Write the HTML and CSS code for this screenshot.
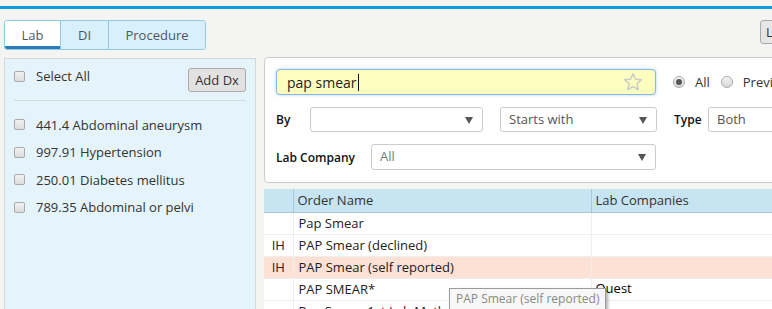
FILE: index.html
```html
<!DOCTYPE html>
<html lang="en">
<head>
  <meta charset="utf-8" />
  <meta name="viewport" content="width=device-width,initial-scale=1" />
  <title>Lab Orders</title>
  <link rel="stylesheet" href="styles.css">
</head>
<body>
  <div class="topbar"></div>

  <div class="head">
    <div class="tabs">
      <button class="tab active">Lab</button>
      <button class="tab">DI</button>
      <button class="tab">Procedure</button>
    </div>
    <button class="side-btn">Lab Orders</button>
  </div>

  <div class="main">
    <aside class="dx-panel">
      <div class="dx-head">
        <label class="chk"><span class="box"></span>Select All</label>
        <button class="btn">Add Dx</button>
      </div>
      <ul class="dx-list">
        <li><label class="chk"><span class="box"></span>441.4 Abdominal aneurysm</label></li>
        <li><label class="chk"><span class="box"></span>997.91 Hypertension</label></li>
        <li><label class="chk"><span class="box"></span>250.01 Diabetes mellitus</label></li>
        <li><label class="chk"><span class="box"></span>789.35 Abdominal or pelvi</label></li>
      </ul>
    </aside>

    <section class="orders">
      <div class="filters">
        <div class="row">
          <div class="search">
            <span class="search-text">pap smear</span><span class="caret"></span>
            <svg class="star" width="20" height="20" viewBox="0 0 20 20"><path d="M10 1.8l2.5 5.4 5.8.6-4.4 4 1.3 5.8L10 14.6l-5.2 3 1.3-5.8-4.4-4 5.8-.6z" fill="none" stroke="#c8c8c8" stroke-width="1.4" stroke-linejoin="round"/></svg>
          </div>
          <label class="radio on"><span class="dot"></span>All</label>
          <label class="radio"><span class="dot"></span>Previous</label>
        </div>
        <div class="row">
          <span class="lbl lbl-by">By</span>
          <div class="select sel-by"></div>
          <div class="select sel-match">Starts with</div>
          <span class="lbl lbl-type">Type</span>
          <div class="select sel-type">Both</div>
        </div>
        <div class="row">
          <span class="lbl lbl-co">Lab Company</span>
          <div class="select sel-co muted">All</div>
        </div>
      </div>

      <table class="grid">
        <thead>
          <tr><th class="c-flag"></th><th class="c-name">Order Name</th><th class="c-co">Lab Companies</th></tr>
        </thead>
        <tbody>
          <tr><td class="c-flag"></td><td>Pap Smear</td><td></td></tr>
          <tr><td class="c-flag">IH</td><td>PAP Smear (declined)</td><td></td></tr>
          <tr class="hl"><td class="c-flag">IH</td><td>PAP Smear (self reported)</td><td></td></tr>
          <tr><td class="c-flag"></td><td>PAP SMEAR*</td><td class="quest">Quest</td></tr>
          <tr><td class="c-flag"></td><td>Pap Smear 1st Lab Method</td><td></td></tr>
        </tbody>
      </table>

      <div class="tooltip">PAP Smear (self reported)</div>
    </section>
  </div>
</body>
</html>
```

FILE: styles.css
```css
:root{
  --blue:#0c9de0; --panel:#e5f3fb; --line:#d2d8dc; --text:#333;
}
*{box-sizing:border-box;margin:0;padding:0}
body{background:#f4f4f2;color:var(--text);font-family:'Open Sans',sans-serif;font-size:13px;width:772px;height:309px;overflow:hidden}
button{font-family:inherit}

.topbar{height:3px;background:var(--blue);margin-top:6px}

.head{display:flex;justify-content:space-between;align-items:flex-start;width:830px;padding-left:4px;margin-top:11px}
.tabs{display:flex;border:1px solid #8fcbe8;border-radius:3px;overflow:hidden;height:30px}
.tab{border:none;background:#d8f0fb;color:#4b5866;font-size:13px;height:100%;border-left:1px solid #8fcbe8}
.tab:first-child{border-left:none}
.tab.active{background:#fff;width:55px;border-bottom:3px solid #2b7cbc;padding-top:3px}
.tab:nth-child(2){width:48px}
.tab:nth-child(3){width:97px}
.side-btn{flex:none;width:70px;height:24px;background:#e6e6e6;border:1px solid #aaa;border-radius:3px;font-size:13px;color:#333;text-align:left;padding-left:5px;white-space:nowrap;overflow:hidden}

.main{display:flex;gap:8px;padding-left:4px;margin-top:7px;width:900px}

.dx-panel{flex:none;width:252px;height:260px;margin-top:1px;background:var(--panel);border:1px solid var(--line);padding:0 9px}
.dx-head{display:flex;justify-content:space-between;align-items:flex-start;padding-top:9px;height:42px;border-bottom:1px solid var(--line)}
.dx-head .chk{margin-top:-1px}
.btn{width:58px;height:24px;background:#e2e2e2;border:1px solid #aaa;border-radius:3px;font-size:13px;color:#333}
.dx-list{list-style:none;padding-top:10px}
.dx-list li{height:27.5px;display:flex;align-items:center}
.chk{display:flex;align-items:center;gap:11px;line-height:18px;white-space:nowrap}
.box{flex:none;width:11px;height:11px;border:1px solid #aaa;border-radius:2px;background:linear-gradient(#f2f2f2,#dcdcdc)}

.orders{flex:none;position:relative;width:600px}
.filters{background:#fff;border:1px solid #ccc;border-radius:4px;height:126px;padding:11px 0 0 11px;display:flex;flex-direction:column;gap:12px}
.row{display:flex;align-items:center;gap:17px}
.row > *{flex:none;white-space:nowrap}
.search{width:380px;height:26px;background:#fdfdbf;border:1px solid #83b9e4;border-radius:4px;box-shadow:0 0 3px rgba(90,160,220,.5);display:flex;align-items:center;padding-left:10px;position:relative}
.search-text{font-size:14px;color:#222}
.caret{width:1px;height:17px;background:#111;margin-left:1px}
.star{position:absolute;right:12px;top:2px}
.radio{display:flex;align-items:center;gap:10px;color:#333}
.radio.on{margin-right:-6px}
.dot{width:12px;height:12px;border:1px solid #aaa;border-radius:50%;background:linear-gradient(#f4f4f4,#d8d8d8);display:flex;align-items:center;justify-content:center}
.radio.on .dot::after{content:'';width:6px;height:6px;border-radius:50%;background:#555}

.lbl{font-weight:600;font-size:12px;color:#111}
.lbl-by{width:17px}
.lbl-type{width:17px}
.lbl-co{width:78px}
.select{height:25px;border:1px solid #ccc;border-radius:3px;background:#fff;color:#555;padding-left:8px;line-height:23px;position:relative}
.select::after{content:'';position:absolute;right:9px;top:9px;border-left:4px solid transparent;border-right:4px solid transparent;border-top:7px solid #555}
.sel-by{width:173px}
.sel-match{width:157px}
.sel-type{width:120px}
.sel-co{width:285px;height:26px}
.muted{color:#777}

.grid{border-collapse:collapse;margin-top:6px;width:620px;background:#fff;table-layout:fixed}
.grid th{background:#c7e4f3;height:23px;font-weight:400;text-align:left;padding-left:4px;color:#333;border-bottom:1px solid #a8c8da;border-left:1px solid #a8c8da}
.grid th:first-child{border-left:none}
.grid td{height:22px;padding-left:5px;border-bottom:1px solid #eee;border-left:1px solid #eee;color:#222;white-space:nowrap;overflow:hidden}
.grid td:first-child{border-left:none}
.grid .c-flag{width:29px;padding-left:0;text-align:center}
.grid .c-name{width:298px}
.grid tr.hl td{background:#fde1d4}
.grid td.quest{vertical-align:top;padding-left:4px;line-height:18px;color:#000}

.tooltip{position:absolute;left:185px;top:231px;height:22px;padding:0 6px;background:#f7f7f7;border:1px solid #9a9a9a;box-shadow:2px 2px 3px rgba(0,0,0,.3);color:#888;font-size:12px;line-height:20px;white-space:nowrap}
```
